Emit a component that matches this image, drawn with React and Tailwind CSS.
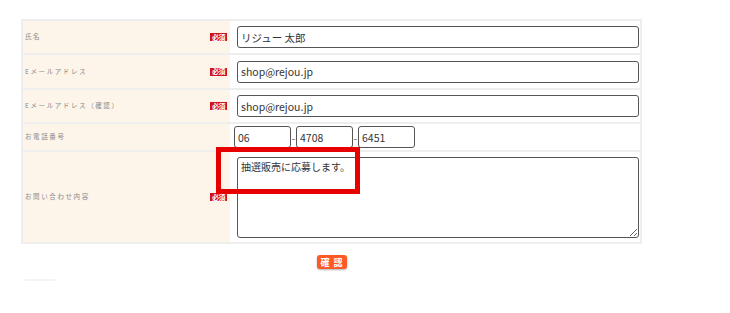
import React from "react";

const labelFont = { fontFamily: '"Noto Sans CJK JP", "Noto Sans", sans-serif' };

function Badge() {
  return (
    <span className="inline-flex items-center justify-center w-[17px] h-[8px] bg-[#d0121b] text-white text-[7px] leading-none font-bold tracking-[-0.5px]">
      必須
    </span>
  );
}

function Row({ label, required, height, children, last }) {
  return (
    <div className={`flex ${last ? "" : "border-b-2 border-[#eeeeee]"}`} style={{ height }}>
      <div className="w-[207px] bg-[#fdf4ea] flex items-center justify-between pl-[2px] pr-[3px]">
        <span className="text-[6.5px] tracking-[1.6px] text-[#8a8a8a]">{label}</span>
        {required && <Badge />}
      </div>
      <div className="flex-1 flex items-center pl-[7px] pr-[1px]">{children}</div>
    </div>
  );
}

const inputClass =
  "h-[22px] w-full border border-[#555] rounded-[3px] bg-white px-[3px] text-[10.5px] text-[#333] outline-none";

const phoneClass =
  "h-[22px] w-[57px] border border-[#555] rounded-[3px] px-[3px] text-[10.5px] text-[#333] outline-none";

export default function App() {
  return (
    <div className="relative flex flex-col w-[730px] h-[313px] bg-white overflow-hidden pt-[19px]" style={labelFont}>
      <div className="ml-[21px] w-[621px] border-2 border-[#eeeeee]">
        <Row label="氏名" required height="34px">
          <input className={inputClass} defaultValue="リジュー 太郎" />
        </Row>
        <Row label="Eメールアドレス" required height="35px">
          <input className={inputClass} defaultValue="shop@rejou.jp" />
        </Row>
        <Row label="Eメールアドレス（確認）" required height="34px">
          <input className={inputClass} defaultValue="shop@rejou.jp" />
        </Row>
        <Row label="お電話番号" height="28px">
          <div className="flex items-center -ml-[3px]">
            <input className={phoneClass} defaultValue="06" />
            <span className="w-[5px] text-center text-[10px] text-[#555]">-</span>
            <input className={phoneClass} defaultValue="4708" />
            <span className="w-[5px] text-center text-[10px] text-[#555]">-</span>
            <input className={phoneClass} defaultValue="6451" />
          </div>
        </Row>
        <Row label="お問い合わせ内容" required height="90px" last>
          <textarea
            className="h-[81px] w-full border border-[#555] rounded-[3px] bg-white px-[3px] pt-[1px] text-[10px] leading-[16px] text-[#333] outline-none resize-y"
            defaultValue="抽選販売に応募します。"
          />
        </Row>
      </div>

      <div className="flex justify-center w-[621px] ml-[21px] mt-[11px]">
        <button className="w-[30px] h-[14px] bg-[#ff5a26] rounded-[3px] text-white text-[9px] font-bold leading-none tracking-[4px] pl-[4px] shadow-[0_1px_2px_rgba(0,0,0,0.3)]">
          確認
        </button>
      </div>

      <div className="ml-[25px] mt-[10px] w-[30px] h-[2px] bg-[#f4f4f4]" />

      <div className="absolute left-[216px] top-[147px] w-[144px] h-[47px] border-[5px] border-[#e60000]" />
    </div>
  );
}
